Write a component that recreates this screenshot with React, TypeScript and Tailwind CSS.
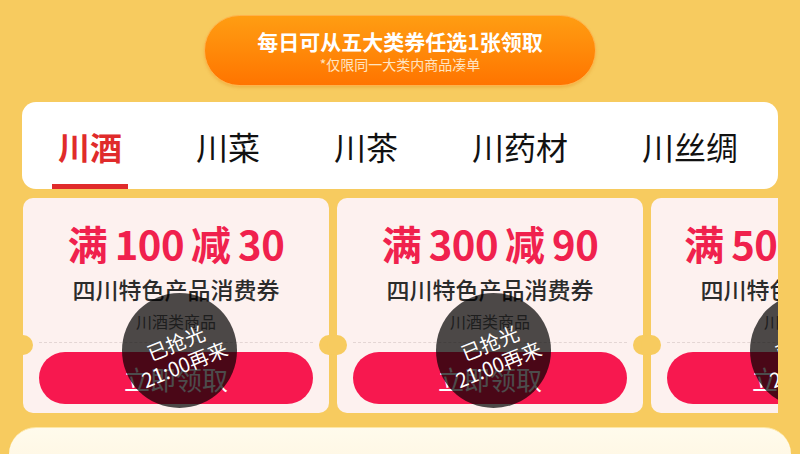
const font = { fontFamily: '"Noto Sans CJK SC", "Noto Sans", sans-serif' };

const tabs = ["川酒", "川菜", "川茶", "川药材", "川丝绸"];

const coupons = [
  { full: "100", off: "30" },
  { full: "300", off: "90" },
  { full: "500", off: "150" },
];

const Coupon = ({ full, off }: { full: string; off: string }) => {
  return (
    <div className="relative w-[306px] h-[215px] shrink-0 rounded-[10px] bg-[#fdf1ef] flex flex-col items-center">
      <div className="mt-[20px] h-[50px] flex items-center text-[40px] font-bold leading-none text-[#f0214d]">
        <span>满</span>
        <span className="mx-[7px] tracking-[-0.5px]">{full}</span>
        <span>减</span>
        <span className="ml-[7px] tracking-[-0.5px]">{off}</span>
      </div>
      <div className="mt-[6px] text-[23px] leading-[30px] font-medium text-[#2b2b2b]">四川特色产品消费券</div>
      <div className="mt-[6px] text-[16px] leading-[22px] text-[#666]">川酒类商品</div>
      <div className="mt-[10px] w-[274px] border-t border-dashed border-[#e4d6d4]" />
      <div className="mt-[9px] w-[274px] h-[52px] rounded-full bg-[#f7184f] flex items-center justify-center text-[26px] text-white">
        立即领取
      </div>

      {/* notches */}
      <div className="absolute left-[-10px] top-[137px] w-5 h-5 rounded-full bg-[#f7cb5f]" />
      <div className="absolute right-[-10px] top-[137px] w-5 h-5 rounded-full bg-[#f7cb5f]" />

      {/* sold-out stamp */}
      <div className="absolute left-[99px] top-[95px] w-[115px] h-[115px] rounded-full bg-black/70 flex items-center justify-center">
        <div className="-rotate-[22deg] flex flex-col items-center text-white text-[20px] leading-[23px] mt-[4px]">
          <span>已抢光</span>
          <span>21:00再来</span>
        </div>
      </div>
    </div>
  );
};

const App = () => {
  return (
    <div style={font} className="w-[800px] h-[454px] bg-[#f7cb5f] overflow-hidden flex flex-col">
      <div className="mx-auto mt-[15px] w-[392px] h-[71px] rounded-full bg-gradient-to-b from-[#ff9d12] to-[#ff7400] border border-[#ffb24a] shadow-[0_2px_3px_rgba(220,120,0,0.25)] flex flex-col items-center justify-center">
        <div className="text-[21px] leading-[26px] font-bold text-white">每日可从五大类券任选1张领取</div>
        <div className="mt-[2px] text-[14px] leading-[17px] text-[#ffe4c2]">*仅限同一大类内商品凑单</div>
      </div>

      <div className="mx-[22px] mt-[16px] h-[87px] rounded-[14px] bg-white flex items-stretch pl-[36px] gap-[74px]">
        {tabs.map((t, i) => (
          <div key={t} className="relative flex items-center">
            <span className={i === 0 ? "text-[32px] leading-none font-bold text-[#e02b2b]" : "text-[32px] leading-none text-[#111]"}>
              {t}
            </span>
            {i === 0 && <div className="absolute bottom-0 left-[-6px] right-[-6px] h-[5px] bg-[#e02b2b]" />}
          </div>
        ))}
      </div>

      <div className="ml-[23px] mr-[22px] mt-[9px] flex gap-[8px] overflow-hidden shrink-0">
        {coupons.map((c) => (
          <Coupon key={c.full} full={c.full} off={c.off} />
        ))}
      </div>

      <div className="mx-[9px] mt-[14px] flex-1 rounded-t-[32px] bg-gradient-to-b from-[#fffbec] to-[#fff8e6] border-t border-[#fde7a6]" />
    </div>
  );
};

export default App;
